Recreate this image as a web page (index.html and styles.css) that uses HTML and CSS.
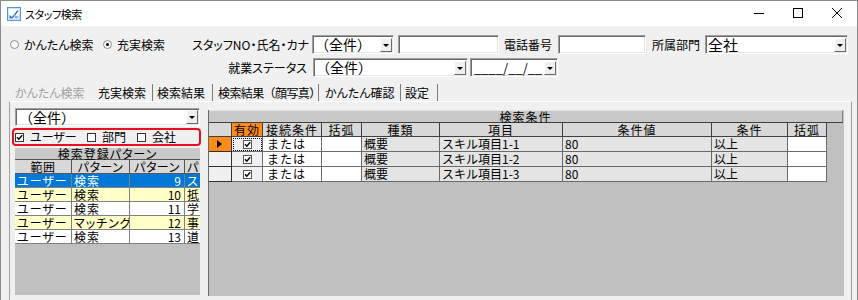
FILE: index.html
```html
<!DOCTYPE html>
<html lang="ja">
<head>
<meta charset="utf-8">
<title>スタッフ検索</title>
<link rel="stylesheet" href="styles.css">
</head>
<body>
<div class="window">
  <div class="titlebar">
    <svg class="appicon" viewBox="0 0 14 14" width="14" height="14">
      <rect x="0.5" y="0.5" width="13" height="13" fill="#cfe2f8" stroke="#5a95da"/>
      <rect x="2" y="2" width="10" height="10" fill="#ffffff"/>
      <path d="M2.5 11.5 L2.5 8 L5 10 L10.5 3 L11.5 4 L5.5 11.5 Z" fill="#2a6fc9"/>
      <path d="M7 6.5 L9 9 L11.5 9 L11.5 11.5 L7.5 11.5 Z" fill="#8fb8ea"/>
    </svg>
    <span class="title">スタッフ検索</span>
    <div class="controls">
      <span class="ctl"><svg width="10" height="10" viewBox="0 0 10 10"><path d="M0 5.5 H10" stroke="#000" stroke-width="1"/></svg></span>
      <span class="ctl"><svg width="10" height="10" viewBox="0 0 10 10"><rect x="0.5" y="0.5" width="9" height="9" fill="none" stroke="#000" stroke-width="1"/></svg></span>
      <span class="ctl"><svg width="10" height="10" viewBox="0 0 10 10"><path d="M0 0 L10 10 M10 0 L0 10" stroke="#000" stroke-width="1"/></svg></span>
    </div>
  </div>

  <div class="client">
    <div class="row row1">
      <label class="radio r1"><span class="rb"></span>かんたん検索</label>
      <label class="radio r2"><span class="rb on"></span>充実検索</label>
      <span class="lbl l-staff">スタッフNO・氏名・カナ</span>
      <div class="combo w-staff"><span class="val">（全件）</span><span class="ddb"><span class="arr"></span></span></div>
      <div class="field w-name"></div>
      <span class="lbl l-tel">電話番号</span>
      <div class="field w-tel"></div>
      <span class="lbl l-dept">所属部門</span>
      <div class="combo w-dept"><span class="val big">全社</span><span class="ddb"><span class="arr"></span></span></div>
    </div>
    <div class="row row2">
      <span class="lbl l-status">就業ステータス</span>
      <div class="combo w-status"><span class="val">（全件）</span><span class="ddb"><span class="arr"></span></span></div>
      <div class="combo w-date"><span class="val date">____/__/__</span><span class="ddb"><span class="arr"></span></span></div>
    </div>

    <div class="tabs">
      <span class="tab t1">かんたん検索</span>
      <span class="tab t2">充実検索</span>
      <span class="tab t3">検索結果</span>
      <span class="tab t4">検索結果（顔写真）</span>
      <span class="tab t5">かんたん確認</span>
      <span class="tab t6">設定</span>
    </div>

    <div class="page">
      <div class="left">
        <div class="combo lcombo"><span class="val">（全件）</span><span class="ddb"><span class="arr"></span></span></div>
        <div class="redbox">
          <span class="ck ck1"><svg class="cbx" viewBox="0 0 9 9" width="9" height="9"><rect x="0.5" y="0.5" width="8" height="8" fill="#fff" stroke="#333"/><path d="M2 4.2 L3.8 6.2 L7.2 2.2" fill="none" stroke="#000" stroke-width="1.4"/></svg><span class="cklbl">ユーザー</span></span>
          <span class="ck ck2"><svg class="cbx" viewBox="0 0 9 9" width="9" height="9"><rect x="0.5" y="0.5" width="8" height="8" fill="#fff" stroke="#333"/></svg><span class="cklbl">部門</span></span>
          <span class="ck ck3"><svg class="cbx" viewBox="0 0 9 9" width="9" height="9"><rect x="0.5" y="0.5" width="8" height="8" fill="#fff" stroke="#333"/></svg><span class="cklbl">会社</span></span>
        </div>
        <div class="lgrid">
          <div class="gtitle">検索登録パターン</div>
          <div class="grow ghead">
            <div class="c c1">範囲</div><div class="c c2">パターン</div><div class="c c3">パターン</div><div class="c c4">パ</div>
          </div>
          <div class="grow sel">
            <div class="c c1">ユーザー</div><div class="c c2">検索</div><div class="c c3 num">9</div><div class="c c4">ス</div>
          </div>
          <div class="grow yel">
            <div class="c c1">ユーザー</div><div class="c c2">検索</div><div class="c c3 num">10</div><div class="c c4">抵</div>
          </div>
          <div class="grow wht">
            <div class="c c1">ユーザー</div><div class="c c2">検索</div><div class="c c3 num">11</div><div class="c c4">学</div>
          </div>
          <div class="grow yel">
            <div class="c c1">ユーザー</div><div class="c c2">マッチング</div><div class="c c3 num">12</div><div class="c c4">事</div>
          </div>
          <div class="grow wht">
            <div class="c c1">ユーザー</div><div class="c c2">検索</div><div class="c c3 num">13</div><div class="c c4">道</div>
          </div>
        </div>
      </div>
      <div class="split"></div>
      <div class="right">
        <div class="rgrid">
          <div class="rtitle">検索条件</div>
          <div class="rrow rhead">
            <div class="k k0"></div><div class="k k1 orange">有効</div><div class="k k2">接続条件</div><div class="k k3">括弧</div><div class="k k4">種類</div><div class="k k5">項目</div><div class="k k6">条件値</div><div class="k k7">条件</div><div class="k k8">括弧</div>
          </div>
          <div class="rrow">
            <div class="k k0 cur"><span class="tri"></span></div>
            <div class="k k1 chk focus"><svg class="cbx" viewBox="0 0 9 9" width="9" height="9"><rect x="0.5" y="0.5" width="8" height="8" fill="#fff" stroke="#555"/><path d="M2 4.2 L3.8 6.2 L7.2 2.2" fill="none" stroke="#000" stroke-width="1.4"/></svg></div>
            <div class="k k2 w">または</div><div class="k k3 w"></div><div class="k k4 g">概要</div><div class="k k5 g">スキル項目1-1</div><div class="k k6 g">80</div><div class="k k7 g">以上</div><div class="k k8 w"></div>
          </div>
          <div class="rrow">
            <div class="k k0 rh"></div>
            <div class="k k1 chk"><svg class="cbx" viewBox="0 0 9 9" width="9" height="9"><rect x="0.5" y="0.5" width="8" height="8" fill="#fff" stroke="#555"/><path d="M2 4.2 L3.8 6.2 L7.2 2.2" fill="none" stroke="#000" stroke-width="1.4"/></svg></div>
            <div class="k k2 w">または</div><div class="k k3 w"></div><div class="k k4 g">概要</div><div class="k k5 g">スキル項目1-2</div><div class="k k6 g">80</div><div class="k k7 g">以上</div><div class="k k8 w"></div>
          </div>
          <div class="rrow">
            <div class="k k0 rh"></div>
            <div class="k k1 chk"><svg class="cbx" viewBox="0 0 9 9" width="9" height="9"><rect x="0.5" y="0.5" width="8" height="8" fill="#fff" stroke="#555"/><path d="M2 4.2 L3.8 6.2 L7.2 2.2" fill="none" stroke="#000" stroke-width="1.4"/></svg></div>
            <div class="k k2 w">または</div><div class="k k3 w"></div><div class="k k4 g">概要</div><div class="k k5 g">スキル項目1-3</div><div class="k k6 g">80</div><div class="k k7 g">以上</div><div class="k k8 w"></div>
          </div>
        </div>
      </div>
    </div>
  </div>
</div>
</body>
</html>
```

FILE: styles.css
```css
* { box-sizing: border-box; }
html, body { margin: 0; padding: 0; }
body {
  width: 858px;
  height: 300px;
  overflow: hidden;
  font-family: "Noto Sans CJK JP", "Noto Sans", sans-serif;
  font-size: 12px;
  font-feature-settings: "palt";
  color: #000;
  background: #f0f0f0;
}

.window {
  width: 858px;
  height: 300px;
  border: 1px solid #8c8c8c;
  border-bottom: none;
  background: #f0f0f0;
  display: flex;
  flex-direction: column;
}

/* title bar */
.titlebar {
  height: 25px;
  flex: none;
  background: #fff;
  display: flex;
  align-items: center;
}
.appicon { margin-left: 6px; margin-top: 1px; flex: none; }
.title { margin-left: 4px; font-size: 11px; line-height: 14px; letter-spacing: -0.4px; }
.controls { margin-left: auto; margin-right: 1px; display: flex; }
.ctl {
  width: 39px;
  height: 25px;
  display: flex;
  align-items: center;
  justify-content: center;
  padding-bottom: 2px;
}

/* client */
.client { flex: 1; display: flex; flex-direction: column; }
.row { display: flex; align-items: center; height: 19px; flex: none; }
.row1 { margin-top: 9px; }
.row2 { margin-top: 4px; }

.radio { display: flex; align-items: center; line-height: 14px; }
.rb {
  width: 9px; height: 9px;
  border-radius: 50%;
  border: 1px solid #8a8a8a;
  background: #fff;
  margin-right: 5px;
  display: flex; align-items: center; justify-content: center;
}
.rb.on::after {
  content: "";
  width: 3px; height: 3px;
  border-radius: 50%;
  background: #000;
}
.r1 { margin-left: 9px; width: 93px; }
.r2 { width: 67px; }

.lbl { text-align: right; line-height: 14px; white-space: nowrap; }
.l-staff { width: 140px; padding-right: 1px; }
.l-tel { width: 55px; padding-right: 2px; }
.l-dept { width: 56px; padding-right: 2px; }
.l-status { margin-left: 169px; width: 141px; padding-right: 4px; }

.field, .combo {
  height: 19px;
  background: #fff;
  border: 1px solid;
  border-color: #a0a0a0 #fff #fff #a0a0a0;
  box-shadow: inset 1px 1px 0 #696969, inset -1px -1px 0 #e3e3e3;
  flex: none;
}
.combo { display: flex; align-items: center; }
.combo .val {
  flex: 1;
  font-size: 14px;
  line-height: 15px;
  padding-left: 2px;
  white-space: nowrap;
  font-feature-settings: normal;
}
.combo .val.big { font-size: 15px; line-height: 16px; }
.combo .val.date { font-size: 13px; padding-left: 3px; }
.ddb {
  width: 12px;
  height: 14px;
  margin-right: 1px;
  background: #f0f0f0;
  border: 1px solid;
  border-color: #fff #696969 #696969 #fff;
  display: flex; align-items: center; justify-content: center;
  flex: none;
}
.arr {
  width: 0; height: 0;
  border-top: 3px solid #000;
  border-left: 3px solid transparent;
  border-right: 3px solid transparent;
  margin-top: 1px;
}

.w-staff { margin-left: 2px; width: 82px; }
.w-name { margin-left: 4px; width: 101px; }
.w-tel { margin-left: 4px; width: 88px; }
.w-dept { margin-left: 3px; width: 143px; }
.w-status { margin-left: 2px; width: 155px; }
.w-date { margin-left: 2px; width: 88px; }

/* tabs */
.tabs { display: flex; height: 17px; margin-top: 7px; flex: none; }
.tab {
  display: flex;
  align-items: center;
  line-height: 14px;
  white-space: nowrap;
  border-right: 1px solid #7a7a7a;
  flex: none;
}
.t1 { margin-left: 8px; width: 81px; padding-left: 6px; color: #a0a0a0; border-right: none; }
.t2 { width: 63px; padding-left: 8px; }
.t3 { width: 60px; padding-left: 4px; }
.t4 { width: 106px; padding-left: 5px; font-feature-settings: normal; letter-spacing: -0.6px; }
.t5 { width: 82px; padding-left: 6px; }
.t6 { width: 37px; padding-left: 4px; }

/* page */
.page {
  display: flex;
  margin-left: 8px;
  width: 843px;
  height: 199px;
  border-top: 1px solid #fff;
  border-left: 1px solid #a0a0a0;
  border-right: 1px solid #a0a0a0;
  flex: none;
}
.left {
  width: 194px;
  padding-left: 5px;
  display: flex;
  flex-direction: column;
  flex: none;
}
.lcombo { margin-top: 6px; width: 185px; height: 18px; }
.lcombo .val { font-size: 14px; padding-left: 3px; }
.redbox {
  margin-top: 2px;
  margin-left: -3px;
  width: 189px;
  height: 18px;
  border: 2px solid #e8101e;
  border-radius: 4px;
  display: flex;
  align-items: center;
  padding-left: 1px;
}
.ck { display: flex; align-items: center; line-height: 14px; }
.cbx { flex: none; display: block; }
.cklbl { margin-left: 6px; }
.ck1 { width: 72px; }
.ck2 { width: 50px; }
.ck3 { width: 50px; }

.lgrid {
  margin-top: 2px;
  width: 185px;
  height: 147px;
  background: #c0c0c0;
  overflow: hidden;
}
.gtitle {
  height: 12px;
  line-height: 12px;
  text-align: center;
  background: #c8c8c8;
  border-bottom: 1px solid #555;
  letter-spacing: 1px;
}
.grow {
  display: flex;
  height: 14px;
  border-bottom: 1px solid #808080;
}
.c {
  flex: none;
  height: 13px;
  line-height: 13px;
  padding: 0 2px;
  border-right: 1px solid #808080;
  white-space: nowrap;
  overflow: hidden;
}
.c1 { width: 57px; letter-spacing: 1px; }
.c2 { width: 58px; letter-spacing: 1px; }
.c3 { width: 55px; }
.c4 { width: 15px; border-right: none; }
.num { text-align: right; padding-right: 3px; }
.ghead { background: #d8d8d8; border-bottom-color: #555; }
.ghead .c { text-align: center; border-right-color: #555; letter-spacing: 0.5px; }
.sel { background: #0078d7; color: #fff; }
.yel { background: #ffffc8; }
.wht { background: #fff; }

.split { width: 4px; flex: none; }
.right {
  flex: 1;
  padding-top: 8px;
  padding-right: 7px;
}
.rgrid {
  height: 186px;
  background: #c0c0c0;
  border-left: 1px solid #696969;
  font-feature-settings: normal;
}
.rtitle {
  width: 634px;
  height: 13px;
  line-height: 12px;
  text-align: center;
  background: #c8c8c8;
  border-top: 1px solid #e4e4e4;
  border-bottom: 1px solid #404040;
  border-right: 1px solid #808080;
  letter-spacing: 1px;
}
.rrow { display: flex; height: 15px; }
.k {
  flex: none;
  height: 15px;
  line-height: 14px;
  padding: 0 2px;
  border-right: 1px solid #6a6a6a;
  border-bottom: 1px solid #6a6a6a;
  white-space: nowrap;
  overflow: hidden;
  display: flex;
  align-items: center;
}
.k0 { width: 23px; border-right-color: #303030; }
.k1 { width: 31px; justify-content: center; }
.k2 { width: 59px; padding-left: 4px; letter-spacing: 1px; }
.k3 { width: 40px; }
.k4 { width: 78px; }
.k5 { width: 123px; }
.k6 { width: 149px; }
.k7 { width: 76px; }
.k8 { width: 39px; }
.rhead { height: 14px; }
.rhead .k {
  height: 14px;
  background: #d8d8d8;
  justify-content: center;
  padding: 0;
  border-right-color: #404040;
  border-bottom-color: #404040;
  letter-spacing: 1px;
}
.rhead .k.orange { background: #ff8c1a; }
.cur { background: #ff8c1a; padding-left: 8px; border-bottom-color: #303030; }
.tri {
  width: 0; height: 0;
  border-left: 5px solid #000;
  border-top: 4px solid transparent;
  border-bottom: 4px solid transparent;
}
.rh { background: #f0f0f0; border-bottom-color: #303030; }
.chk { background: #f0f0f0; }
.focus { outline: 1px dotted #000; outline-offset: -2px; }
.w { background: #fff; }
.g { background: #e4e4e4; }
```
